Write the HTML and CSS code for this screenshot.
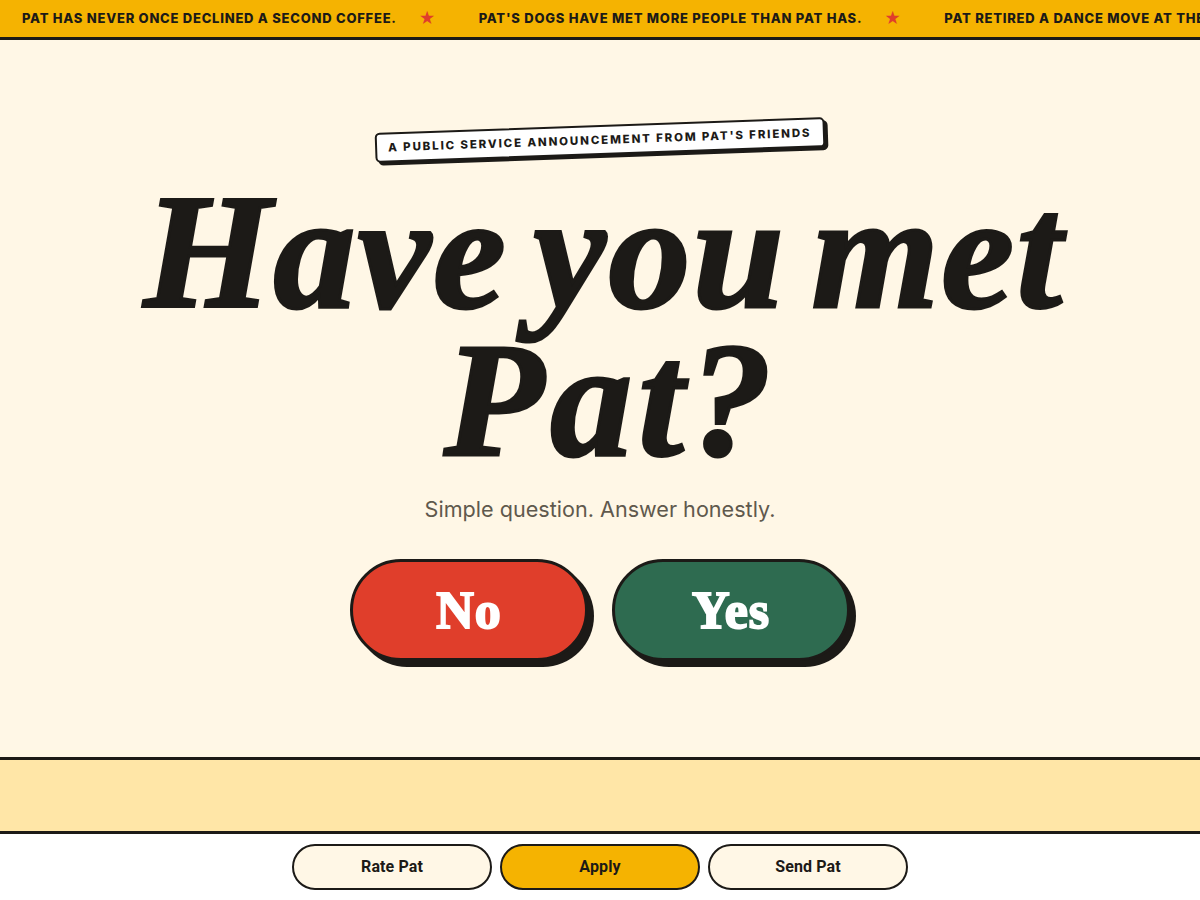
FILE: index.html
```html
<!DOCTYPE html>
<html lang="en">
<head>
    <meta charset="UTF-8">
    <meta name="viewport" content="width=device-width, initial-scale=1.0">
    <title>Have you met Pat?</title>
    <link rel="stylesheet" href="styles.css">
</head>
<body>
    <div class="ticker">
        <span class="ticker-text">PAT HAS NEVER ONCE DECLINED A SECOND COFFEE.</span>
        <span class="ticker-star">&#9733;</span>
        <span class="ticker-text">PAT'S DOGS HAVE MET MORE PEOPLE THAN PAT HAS.</span>
        <span class="ticker-star">&#9733;</span>
        <span class="ticker-text">PAT RETIRED A DANCE MOVE AT THE REQUEST OF THE FAMILY.</span>
    </div>

    <main class="hero">
        <p class="tag">A PUBLIC SERVICE ANNOUNCEMENT FROM PAT'S FRIENDS</p>
        <h1 class="title">Have you met<br><span class="title-name">Pat?</span></h1>
        <p class="subtitle">Simple question. Answer honestly.</p>
        <div class="choices">
            <button class="choice choice-no">No</button>
            <button class="choice choice-yes">Yes</button>
        </div>
    </main>

    <div class="band"></div>

    <nav class="actions">
        <button class="action">Rate Pat</button>
        <button class="action action-main">Apply</button>
        <button class="action">Send Pat</button>
    </nav>
</body>
</html>
```

FILE: styles.css
```css
body {
    font-family: Inter, sans-serif;
    background-color: #FFF7E6;
    color: #1C1A17;
    margin: 0;
    padding: 0;
    height: 900px;
    display: flex;
    flex-direction: column;
    overflow: hidden;
}
.ticker {
    display: flex;
    align-items: center;
    height: 36px;
    padding-bottom: 1px;
    flex-shrink: 0;
    background-color: #F5B301;
    border-bottom: 3px solid #1C1A17;
    overflow: hidden;
    white-space: nowrap;
    font-size: 13px;
    font-weight: 800;
    letter-spacing: 0.76px;
}
.ticker-text {
    padding-left: 22px;
    flex-shrink: 0;
}
.ticker-star {
    width: 16px;
    color: #E03E2B;
    font-size: 16px;
    letter-spacing: 0;
    text-align: center;
    margin: 0 22px;
    flex-shrink: 0;
}
.hero {
    flex: 1;
    display: flex;
    flex-direction: column;
    align-items: center;
    padding-top: 85px;
}
.tag {
    margin: 0;
    padding: 6px 11px;
    background-color: #FFFFFF;
    border: 2px solid #1C1A17;
    border-radius: 5px;
    box-shadow: 3px 3px 0 #1C1A17;
    font-size: 11.5px;
    font-weight: 800;
    letter-spacing: 1.84px;
    line-height: 14px;
    transform: rotate(-2deg);
}
.title {
    margin: 23px 0 0;
    padding-left: 8px;
    font-family: "Liberation Serif", serif;
    font-size: 164px;
    font-style: italic;
    font-weight: 700;
    line-height: 148px;
    letter-spacing: 2.3px;
    word-spacing: -18px;
    text-align: center;
    -webkit-text-stroke: 3px #1C1A17;
}
.title-name {
    padding-left: 14px;
    letter-spacing: 6px;
}
.subtitle {
    margin: 20px 0 0;
    font-size: 21.6px;
    line-height: 30px;
    color: #5F594D;
}
.choices {
    display: flex;
    gap: 24px;
    margin-top: 35px;
}
.choice {
    width: 238px;
    height: 102px;
    border: 3px solid #1C1A17;
    border-radius: 51px;
    box-shadow: 6px 6px 0 #1C1A17;
    color: #FFFFFF;
    font-family: "Liberation Serif", serif;
    font-size: 52px;
    font-weight: 700;
    letter-spacing: 1px;
    -webkit-text-stroke: 2px #FFFFFF;
}
.choice-no {
    background-color: #E03E2B;
}
.choice-yes {
    background-color: #2E6B50;
}
.band {
    height: 71px;
    flex-shrink: 0;
    background-color: #FFE6A7;
    border-top: 3px solid #1C1A17;
    border-bottom: 3px solid #1C1A17;
}
.actions {
    display: flex;
    justify-content: center;
    gap: 8px;
    height: 56px;
    flex-shrink: 0;
    padding-top: 10px;
    background-color: #FFFFFF;
}
.action {
    width: 200px;
    height: 46px;
    padding-bottom: 3px;
    background-color: #FFF7E6;
    border: 2px solid #1C1A17;
    border-radius: 23px;
    color: #1C1A17;
    font-family: Roboto, sans-serif;
    font-size: 16px;
    font-weight: 700;
    letter-spacing: 0.1px;
}
.action-main {
    background-color: #F5B301;
}
```
